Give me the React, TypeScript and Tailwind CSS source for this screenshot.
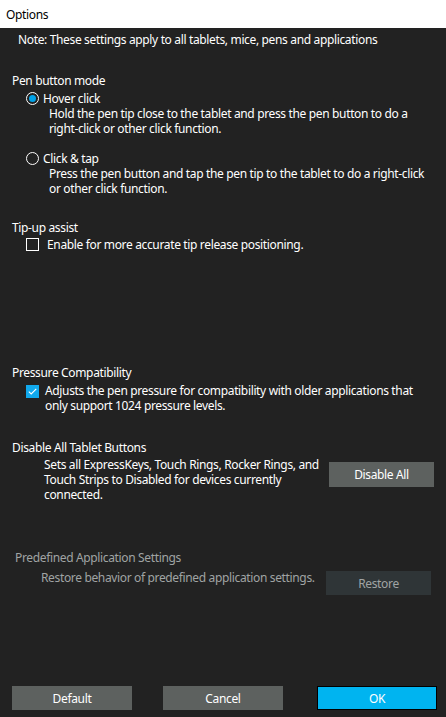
import React from "react";

function Radio({ checked }: { checked?: boolean }) {
  return (
    <span className="flex h-[13px] w-[13px] shrink-0 items-center justify-center rounded-full border border-white">
      {checked && <span className="h-[7px] w-[7px] rounded-full bg-[#00a2e8]" />}
    </span>
  );
}

function Check({ checked }: { checked?: boolean }) {
  if (checked) {
    return (
      <span className="flex h-[13px] w-[13px] shrink-0 items-center justify-center bg-[#11a9ed]">
        <svg width="9" height="7" viewBox="0 0 9 7" fill="none">
          <path d="M0.8 3.6 L3.2 6 L8.3 0.8" stroke="white" strokeWidth="1.1" />
        </svg>
      </span>
    );
  }
  return <span className="h-[13px] w-[13px] shrink-0 border border-white" />;
}

function Btn({ label, variant = "gray", tall }: { label: string; variant?: "gray" | "blue" | "off"; tall?: boolean }) {
  const cls =
    variant === "blue"
      ? "bg-[#00b4f0] border border-black text-white"
      : variant === "off"
      ? "bg-[#2f3537] text-[#a0a4a4]"
      : "bg-[#5d615f] text-white";
  return (
    <div className={`flex items-center justify-center text-[12px] ${tall ? "h-[25px]" : "h-[24px]"} ${cls}`}>{label}</div>
  );
}

export default function App() {
  return (
    <div
      className="flex h-[717px] w-[446px] flex-col bg-[#222222] text-[12px] leading-[15px] tracking-[-0.35px] text-white"
      style={{ fontFamily: '"Segoe UI", "Noto Sans", sans-serif' }}
    >
      <div className="flex h-[28px] items-center bg-white pl-[6px] text-black">Options</div>

      <div className="pl-[18px] pt-[4px]">Note: These settings apply to all tablets, mice, pens and applications</div>

      <div className="mt-[26px] pl-[12px]">Pen button mode</div>
      <div className="mt-[3px] flex items-center gap-[4px] pl-[26px]">
        <Radio checked />
        <span>Hover click</span>
      </div>
      <div className="pl-[49px] pr-[20px]">
        Hold the pen tip close to the tablet and press the pen button to do a right-click or other click function.
      </div>
      <div className="mt-[15px] flex items-center gap-[4px] pl-[26px]">
        <Radio />
        <span>Click &amp; tap</span>
      </div>
      <div className="pl-[49px] pr-[20px]">
        Press the pen button and tap the pen tip to the tablet to do a right-click or other click function.
      </div>

      <div className="mt-[24px] pl-[12px]">Tip-up assist</div>
      <div className="mt-[2px] flex items-center gap-[8px] pl-[26px]">
        <Check />
        <span>Enable for more accurate tip release positioning.</span>
      </div>

      <div className="mt-[113px] pl-[12px]">Pressure Compatibility</div>
      <div className="mt-[3px] flex items-start gap-[6px] pl-[26px] pr-[20px]">
        <span className="mt-[2px]">
          <Check checked />
        </span>
        <span>Adjusts the pen pressure for compatibility with older applications that only support 1024 pressure levels.</span>
      </div>

      <div className="mt-[27px] pl-[12px]">Disable All Tablet Buttons</div>
      <div className="mt-[2px] flex items-start pl-[44px]">
        <div className="w-[275px]">
          Sets all ExpressKeys, Touch Rings, Rocker Rings, and Touch Strips to Disabled for devices currently connected.
        </div>
        <div className="ml-[10px] mt-[5px] w-[105px]">
          <Btn label="Disable All" tall />
        </div>
      </div>

      <div className="mt-[48px] pl-[15px] text-[#a0a4a4]">Predefined Application Settings</div>
      <div className="mt-[5px] flex items-start pl-[41px] text-[#a0a4a4]">
        <div className="w-[278px]">Restore behavior of predefined application settings.</div>
        <div className="ml-[7px] mt-[1px] w-[105px]">
          <Btn label="Restore" variant="off" />
        </div>
      </div>

      <div className="mt-auto mb-[7px] flex items-center pl-[12px]">
        <div className="w-[120px]">
          <Btn label="Default" />
        </div>
        <div className="ml-[31px] w-[120px]">
          <Btn label="Cancel" />
        </div>
        <div className="ml-[34px] w-[120px]">
          <Btn label="OK" variant="blue" />
        </div>
      </div>
    </div>
  );
}
